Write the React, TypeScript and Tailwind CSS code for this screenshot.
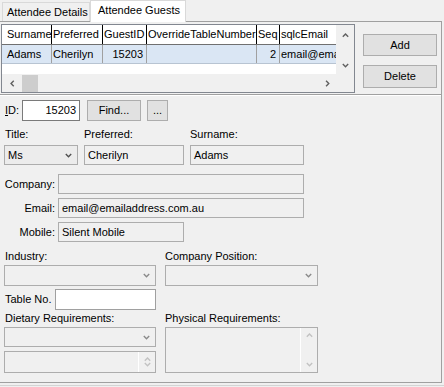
import React from "react";

type Dir = "up" | "down" | "left" | "right";

function Chevron({ dir, color = "#606060" }: { dir: Dir; color?: string }) {
  const vertical = dir === "up" || dir === "down";
  const pts = {
    down: "0.8,0.8 3.5,3.5 6.2,0.8",
    up: "0.8,3.5 3.5,0.8 6.2,3.5",
    left: "3.5,0.8 0.8,3.5 3.5,6.2",
    right: "0.8,0.8 3.5,3.5 0.8,6.2",
  }[dir];
  return (
    <svg
      width={vertical ? 7 : 5}
      height={vertical ? 5 : 7}
      viewBox={vertical ? "0 0 7 4.5" : "0 0 4.5 7"}
      className="block"
    >
      <polyline points={pts} fill="none" stroke={color} strokeWidth="1.4" />
    </svg>
  );
}

type Col = { name: string; w: string; val: string; right?: boolean; first?: boolean; last?: boolean };

const cols: Col[] = [
  { name: "Surname", w: "w-[50px]", val: "Adams", first: true },
  { name: "Preferred", w: "w-[51px]", val: "Cherilyn" },
  { name: "GuestID", w: "w-[44px]", val: "15203", right: true },
  { name: "OverrideTableNumber", w: "w-[110px]", val: "" },
  { name: "Seq", w: "w-[23px]", val: "2", right: true },
  { name: "sqlcEmail", w: "w-[56px]", val: "email@emailaddress.com.au", last: true },
];

function ReadOnly({ value, className }: { value?: string; className: string }) {
  return (
    <div
      className={`flex items-center overflow-hidden whitespace-nowrap border border-[#adadad] bg-[#f0f0f0] pl-[3px] ${className}`}
    >
      {value}
    </div>
  );
}

function Combo({ value, className, enabled = false }: { value?: string; className: string; enabled?: boolean }) {
  return (
    <div
      className={`flex items-center border border-[#adadad] ${enabled ? "bg-[#ececec]" : "bg-[#f0f0f0]"} pl-[3px] ${className}`}
    >
      <div className="flex-1">{value}</div>
      <div className="flex w-[17px] justify-center">
        <Chevron dir="down" color={enabled ? "#505050" : "#8a8a8a"} />
      </div>
    </div>
  );
}

function Memo({ className }: { className: string }) {
  return (
    <div className={`flex border border-[#adadad] bg-[#f0f0f0] ${className}`}>
      <div className="flex-1" />
      <div className="flex w-[17px] flex-col items-center justify-between border-l border-white py-[5px]">
        <Chevron dir="up" color="#c2c2c2" />
        <Chevron dir="down" color="#c2c2c2" />
      </div>
    </div>
  );
}

function Button({ label, className }: { label: string; className: string }) {
  return (
    <div className={`flex items-center justify-center border border-[#adadad] bg-[#e1e1e1] ${className}`}>
      {label}
    </div>
  );
}

export default function App() {
  return (
    <div className="h-[387px] w-[444px] overflow-hidden bg-[#f0f0f0] font-['Liberation_Sans',Arial,sans-serif] text-[11px] leading-[13px] text-black">
      {/* Tabs */}
      <div className="relative z-10 flex h-[21px] items-end">
        <div className="ml-[2px] flex h-[19px] w-[88px] items-center border border-b-0 border-[#d9d9d9] bg-[#f0f0f0] pl-[4px]">
          Attendee Details
        </div>
        <div className="-mb-px flex h-[22px] w-[96px] items-start border border-b-0 border-[#d9d9d9] bg-white pl-[7px] pt-[3px]">
          Attendee Guests
        </div>
      </div>

      {/* Tab panel */}
      <div className="h-[362px] w-[442px] border-b border-r border-t border-[#a0a0a0]">
        {/* Grid + buttons */}
        <div className="flex h-[73px] border-b border-[#a0a0a0]">
          <div className="ml-px mt-[2px] h-[69px] w-[354px] border border-[#828790] bg-white">
            <div className="flex h-[49px]">
              <div className="w-[334px] overflow-hidden">
                <div className="flex h-[20px] border-b border-[#707070]">
                  {cols.map((c) => (
                    <div
                      key={c.name}
                      className={`${c.w} flex shrink-0 items-center overflow-hidden whitespace-nowrap ${
                        c.first ? "pl-[5px]" : "pl-[1px]"
                      } ${c.last ? "" : "border-r border-black"}`}
                    >
                      {c.name}
                    </div>
                  ))}
                </div>
                <div className="flex h-[19px] border-b border-[#b8c4d2] bg-[#dae6f4]">
                  {cols.map((c) => (
                    <div
                      key={c.name}
                      className={`${c.w} flex shrink-0 items-center overflow-hidden whitespace-nowrap ${
                        c.right ? "justify-end pr-[3px]" : c.first ? "pl-[5px]" : "pl-[1px]"
                      } ${c.last ? "" : "border-r border-[#a0a0a0]"}`}
                    >
                      {c.val}
                    </div>
                  ))}
                </div>
              </div>
              <div className="flex w-[18px] flex-col items-center justify-between bg-[#f0f0f0] pb-[6px] pt-[8px]">
                <Chevron dir="up" />
                <Chevron dir="down" />
              </div>
            </div>
            <div className="flex h-[18px] bg-[#f0f0f0]">
              <div className="flex w-[334px] items-center">
                <div className="flex w-[20px] justify-center">
                  <Chevron dir="left" />
                </div>
                <div className="h-[17px] w-[16px] self-end bg-[#cdcdcd]" />
                <div className="flex-1" />
                <div className="flex w-[18px] justify-center">
                  <Chevron dir="right" />
                </div>
              </div>
            </div>
          </div>
          <div className="flex flex-col pl-[8px]">
            <Button label="Add" className="mt-[12px] h-[22px] w-[74px]" />
            <Button label="Delete" className="mt-[9px] h-[23px] w-[74px]" />
          </div>
        </div>

        {/* Form */}
        <div className="border-t border-white px-[4px]">
          <div className="mt-[4px] flex h-[21px] items-center">
            <div className="w-[18px] pl-px">
              <span className="underline">I</span>D:
            </div>
            <div className="flex h-[21px] w-[58px] items-center justify-end border border-[#7a7a7a] bg-white pr-[3px]">
              15203
            </div>
            <Button label="Find..." className="ml-[7px] h-[21px] w-[54px]" />
            <Button label="..." className="ml-[6px] h-[21px] w-[21px]" />
          </div>

          <div className="mt-[6px] flex leading-[14px]">
            <div className="w-[74px] pl-px">Title:</div>
            <div className="ml-[6px] w-[100px]">Preferred:</div>
            <div className="ml-[6px] w-[114px]">Surname:</div>
          </div>
          <div className="mt-[4px] flex">
            <Combo value="Ms" enabled className="h-[20px] w-[74px]" />
            <ReadOnly value="Cherilyn" className="ml-[6px] h-[20px] w-[100px]" />
            <ReadOnly value="Adams" className="ml-[6px] h-[20px] w-[114px]" />
          </div>

          <div className="mt-[9px] flex items-center">
            <div className="w-[54px] pr-[3px] text-right">Company:</div>
            <ReadOnly className="h-[20px] w-[246px]" />
          </div>
          <div className="mt-[4px] flex items-center">
            <div className="w-[54px] pr-[3px] text-right">Email:</div>
            <ReadOnly value="email@emailaddress.com.au" className="h-[20px] w-[246px]" />
          </div>
          <div className="mt-[4px] flex items-center">
            <div className="w-[54px] pr-[3px] text-right">Mobile:</div>
            <ReadOnly value="Silent Mobile" className="h-[20px] w-[126px]" />
          </div>

          <div className="mt-[7px] flex leading-[14px]">
            <div className="w-[152px] pl-px">Industry:</div>
            <div className="ml-[9px] w-[153px]">Company Position:</div>
          </div>
          <div className="mt-[2px] flex">
            <Combo className="h-[21px] w-[152px]" />
            <Combo className="ml-[9px] h-[21px] w-[153px]" />
          </div>

          <div className="mt-[3px] flex items-center">
            <div className="w-[51px] pl-px">Table No.</div>
            <div className="h-[21px] w-[101px] border border-[#a0a0a0] bg-white" />
          </div>

          <div className="mt-px flex leading-[14px]">
            <div className="w-[152px] pl-px">Dietary Requirements:</div>
            <div className="ml-[9px] w-[153px]">Physical Requirements:</div>
          </div>
          <div className="mt-[2px] flex">
            <div className="flex w-[152px] flex-col">
              <Combo className="h-[20px] w-[152px]" />
              <Memo className="mt-[4px] h-[22px] w-[152px]" />
            </div>
            <Memo className="ml-[9px] h-[46px] w-[153px]" />
          </div>
        </div>
      </div>
      <div className="mt-[2px] h-px w-[444px] bg-[#d4d4d4]" />
    </div>
  );
}
